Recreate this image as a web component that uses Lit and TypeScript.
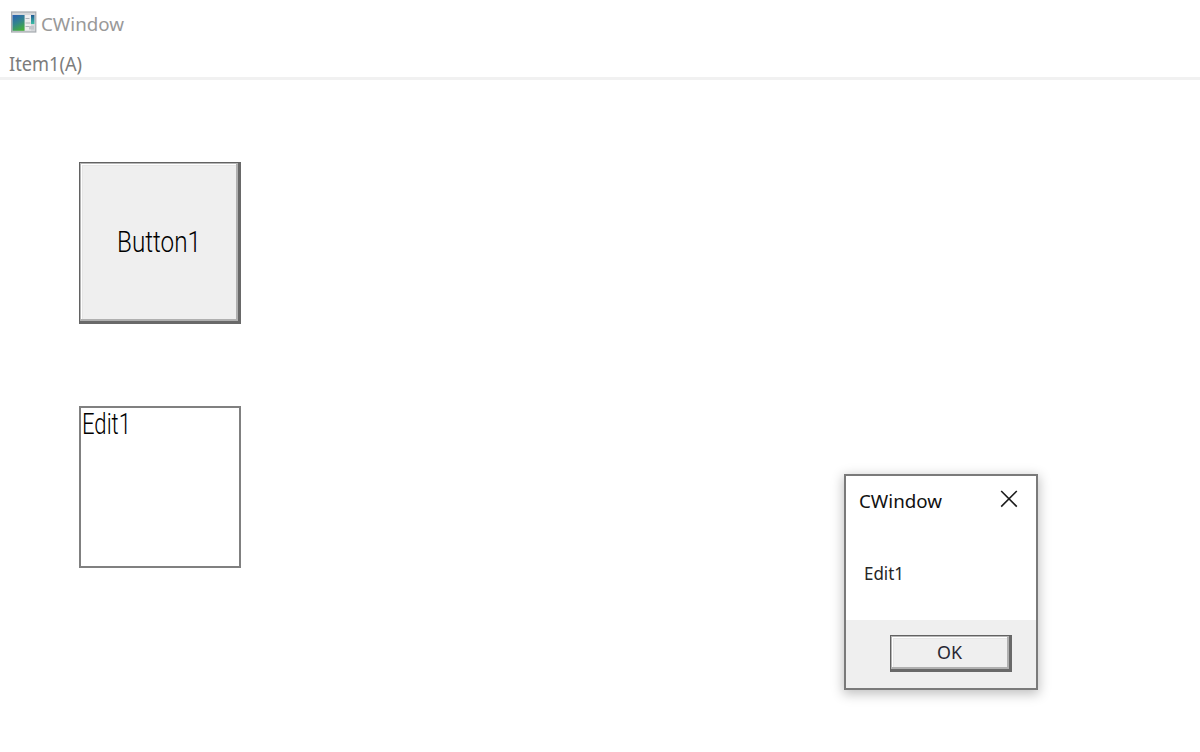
import { html, css, svg, LitElement } from 'lit';
import { customElement, property } from 'lit/decorators.js';

@customElement('fit-label')
export class FitLabel extends LitElement {
  @property() text = '';
  @property({ type: Number }) width = 80;
  @property({ type: Number }) height = 24;
  @property({ type: Number }) baseline = 18;

  static styles = css`
    :host {
      display: block;
      flex: none;
    }
    .label {
      display: block;
      overflow: visible;
      fill: currentColor;
    }
  `;

  render() {
    return html`
      <svg class="label" width=${this.width} height=${this.height}>
        ${svg`<text x="0" y=${this.baseline} textLength=${this.width} lengthAdjust="spacingAndGlyphs">${this.text}</text>`}
      </svg>
    `;
  }
}

@customElement('classic-button')
export class ClassicButton extends LitElement {
  static styles = css`
    :host {
      display: block;
      box-sizing: border-box;
      background: #efefef;
      border: 1px solid #626262;
      border-right: 3px solid #696969;
      border-bottom: 3px solid #696969;
    }
    .face {
      box-sizing: border-box;
      height: 100%;
      display: flex;
      align-items: center;
      justify-content: center;
      border: 1px solid #b4b4b4;
      border-right: 2px solid #b0b0b0;
      border-bottom: 2px solid #b0b0b0;
      box-shadow:
        inset 1px 1px 0 #fff,
        inset 2px 2px 0 #e6e6e6;
    }
  `;

  render() {
    return html`<div class="face"><slot></slot></div>`;
  }
}

@customElement('message-box')
export class MessageBox extends LitElement {
  static styles = css`
    :host {
      box-sizing: border-box;
      display: flex;
      flex-direction: column;
      width: 194px;
      height: 216px;
      border: 2px solid #7a7a7a;
      background: #fff;
      box-shadow: 0 3px 11px 1px rgba(0, 0, 0, 0.25);
      color: #111;
      font-family: 'Noto Sans', 'Open Sans', sans-serif;
    }
    .title {
      display: flex;
      justify-content: space-between;
      padding: 13px 18px 0 13px;
      font-size: 18.5px;
    }
    .close {
      display: block;
    }
    .message {
      flex: 1;
      padding: 48px 0 0 17.5px;
      font-size: 17.5px;
      color: #262626;
    }
    .footer {
      box-sizing: border-box;
      height: 68px;
      padding: 15px 24px 0 44px;
      background: #efefef;
    }
    .ok {
      height: 37px;
      font-size: 18px;
      color: #282833;
    }
  `;

  render() {
    return html`
      <div class="title">
        <fit-label text="CWindow" width="83" height="24" baseline="18.5"></fit-label>
        <svg class="close" width="18" height="19" viewBox="0 0 18 19">
          <path d="M1.2 2 L16.8 17.6 M16.8 2 L1.2 17.6" stroke="#1c1c1c" stroke-width="1.6" />
        </svg>
      </div>
      <div class="message">
        <fit-label text="Edit1" width="40" height="24" baseline="18.5"></fit-label>
      </div>
      <div class="footer">
        <classic-button class="ok">
          <fit-label text="OK" width="25" height="24" baseline="18.5"></fit-label>
        </classic-button>
      </div>
    `;
  }
}

@customElement('app-root')
export class AppRoot extends LitElement {
  static styles = css`
    :host {
      display: block;
      position: relative;
      width: 1200px;
      height: 752px;
      overflow: hidden;
      background: #fff;
      font-family: 'Noto Sans', 'Open Sans', sans-serif;
    }
    .titlebar {
      display: flex;
      box-sizing: border-box;
      height: 46px;
      padding: 11px 0 0 11px;
      gap: 4px;
      font-size: 18.5px;
      color: #999;
    }
    .icon {
      display: block;
      flex: none;
    }
    .menu {
      box-sizing: border-box;
      height: 34px;
      padding: 6px 0 0 9px;
      border-bottom: 3px solid #f1f1f1;
      font-size: 19px;
      color: #7c7c7c;
    }
    .client {
      display: flex;
      flex-direction: column;
      gap: 82px;
      padding: 82px 0 0 79px;
      font-family: Roboto, 'Liberation Sans', sans-serif;
      font-weight: 300;
      font-size: 29.5px;
      color: #000;
    }
    .button,
    .edit {
      width: 162px;
      height: 162px;
    }
    .edit {
      box-sizing: border-box;
      padding: 3px 0 0 1px;
      border: 2px solid #808080;
    }
    .dialog {
      position: absolute;
      left: 844px;
      top: 474px;
    }
  `;

  render() {
    return html`
      <div class="titlebar">
        <svg class="icon" width="26" height="22" viewBox="0 0 26 22">
          <defs>
            <linearGradient id="screen" x1="0.2" y1="0" x2="0.6" y2="1">
              <stop offset="0" stop-color="#2b64b0" />
              <stop offset="0.5" stop-color="#32858c" />
              <stop offset="1" stop-color="#43ad3d" />
            </linearGradient>
            <linearGradient id="bar" x1="0" y1="0" x2="0" y2="1">
              <stop offset="0" stop-color="#225b94" />
              <stop offset="1" stop-color="#39bfa4" />
            </linearGradient>
          </defs>
          <rect x="0.6" y="1" width="24.2" height="20" fill="#d4d7da" stroke="#a6aaaf" stroke-width="1.2" />
          <rect x="1.5" y="4" width="12" height="15.8" fill="url(#screen)" />
          <rect x="14" y="4" width="6" height="15.5" fill="#eeeeef" />
          <path d="M14.5 7.5h4M14.5 12h5M14.5 15.5h4" stroke="#aeb4ba" />
          <rect x="20" y="4" width="3.4" height="9" fill="url(#bar)" />
          <rect x="18" y="15" width="5" height="3.5" fill="#c3c5ca" />
        </svg>
        <fit-label text="CWindow" width="83" height="24" baseline="19.5"></fit-label>
      </div>
      <div class="menu">
        <fit-label text="Item1(A)" width="73" height="24" baseline="18.5"></fit-label>
      </div>
      <div class="client">
        <classic-button class="button">
          <fit-label text="Button1" width="84" height="30" baseline="24.5"></fit-label>
        </classic-button>
        <div class="edit">
          <fit-label text="Edit1" width="49" height="28" baseline="22.5"></fit-label>
        </div>
      </div>
      <message-box class="dialog"></message-box>
    `;
  }
}
